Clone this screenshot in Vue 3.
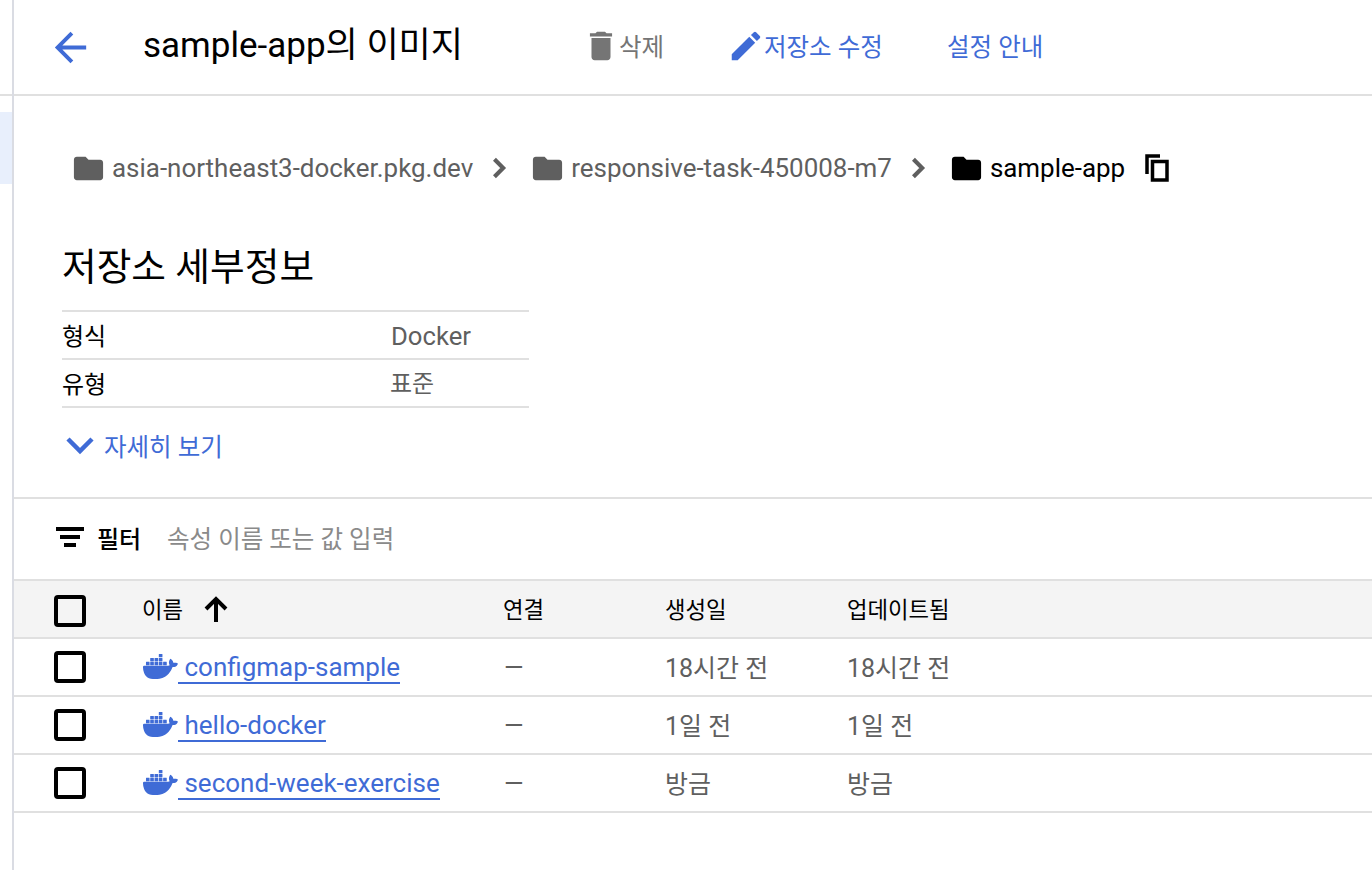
<script setup>
const docker = "M13.983 11.078h2.119a.186.186 0 00.186-.185V9.006a.186.186 0 00-.186-.186h-2.119a.185.185 0 00-.185.185v1.888c0 .102.083.185.185.185m-2.954-5.43h2.118a.186.186 0 00.186-.186V3.574a.186.186 0 00-.186-.185h-2.118a.185.185 0 00-.185.185v1.888c0 .102.082.185.185.186m0 2.716h2.118a.187.187 0 00.186-.186V6.29a.186.186 0 00-.186-.185h-2.118a.185.185 0 00-.185.185v1.887c0 .102.082.185.185.186m-2.93 0h2.12a.186.186 0 00.184-.186V6.29a.185.185 0 00-.185-.185H8.1a.185.185 0 00-.185.185v1.887c0 .102.083.185.185.186m-2.964 0h2.119a.186.186 0 00.185-.186V6.29a.185.185 0 00-.185-.185H5.136a.186.186 0 00-.186.185v1.887c0 .102.084.185.186.186m5.893 2.715h2.118a.186.186 0 00.186-.185V9.006a.186.186 0 00-.186-.186h-2.118a.185.185 0 00-.185.185v1.888c0 .102.082.185.185.185m-2.93 0h2.12a.185.185 0 00.184-.185V9.006a.185.185 0 00-.184-.186h-2.12a.185.185 0 00-.184.185v1.888c0 .102.083.185.185.185m-2.964 0h2.119a.185.185 0 00.185-.185V9.006a.185.185 0 00-.184-.186h-2.12a.186.186 0 00-.186.186v1.887c0 .102.084.185.186.185m-2.92 0h2.12a.185.185 0 00.184-.185V9.006a.185.185 0 00-.184-.186h-2.12a.185.185 0 00-.185.185v1.888c0 .102.083.185.185.185M23.763 9.89c-.065-.051-.672-.51-1.954-.51-.338.001-.676.03-1.01.087-.248-1.7-1.653-2.53-1.716-2.566l-.344-.199-.226.327c-.284.438-.49.922-.612 1.43-.23.97-.09 1.882.403 2.661-.595.332-1.55.413-1.744.42H.751a.751.751 0 00-.75.748 11.376 11.376 0 00.692 4.062c.545 1.428 1.355 2.48 2.41 3.124 1.18.723 3.1 1.137 5.275 1.137.983.003 1.963-.086 2.93-.266a12.248 12.248 0 003.823-1.389c.98-.567 1.86-1.288 2.61-2.136 1.252-1.418 1.998-2.997 2.553-4.4h.221c1.372 0 2.215-.549 2.68-1.009.309-.293.55-.65.707-1.046l.098-.288Z";
const rows = [
  { name: "configmap-sample", created: "18시간 전", updated: "18시간 전" },
  { name: "hello-docker", created: "1일 전", updated: "1일 전" },
  { name: "second-week-exercise", created: "방금", updated: "방금" },
];
const folder = "M10 4H4c-1.1 0-2 .9-2 2v12c0 1.1.9 2 2 2h16c1.1 0 2-.9 2-2V8c0-1.1-.9-2-2-2h-8l-2-2z";
</script>

<template>
  <div class="page">
    <aside class="rail"><div class="rail-head"></div><div class="rail-active"></div></aside>
    <main class="content">
      <header class="bar">
        <button class="back" aria-label="뒤로">
          <svg viewBox="0 0 24 24" width="47" height="47"><path fill="currentColor" d="M20 11H7.83l5.59-5.59L12 4l-8 8 8 8 1.41-1.41L7.83 13H20v-2z"/></svg>
        </button>
        <h1 class="title">sample-app의 이미지</h1>
        <button class="act act-del">
          <svg viewBox="0 0 24 24" width="38" height="38"><path fill="currentColor" d="M6 19c0 1.1.9 2 2 2h8c1.1 0 2-.9 2-2V7H6v12zM19 4h-3.5l-1-1h-5l-1 1H5v2h14V4z"/></svg>
          <span>삭제</span>
        </button>
        <button class="act act-edit">
          <svg viewBox="0 0 24 24" width="38" height="38"><path fill="currentColor" d="M3 17.25V21h3.75L17.81 9.94l-3.75-3.75L3 17.25zM20.71 7.04a1 1 0 0 0 0-1.41l-2.34-2.34a1 1 0 0 0-1.41 0l-1.83 1.83 3.75 3.75 1.83-1.83z"/></svg>
          <span>저장소 수정</span>
        </button>
        <button class="act act-guide"><span>설정 안내</span></button>
      </header>

      <nav class="crumbs">
        <svg class="crumb-folder" viewBox="0 0 24 24" width="35" height="35"><path fill="currentColor" :d="folder"/></svg>
        <span class="crumb-text">asia-northeast3-docker.pkg.dev</span>
        <svg class="crumb-sep" viewBox="0 0 24 24" width="38" height="38"><path fill="none" stroke="currentColor" stroke-width="2.6" d="M8.5 6.5l5.5 5.5-5.5 5.5"/></svg>
        <svg class="crumb-folder" viewBox="0 0 24 24" width="35" height="35"><path fill="currentColor" :d="folder"/></svg>
        <span class="crumb-text">responsive-task-450008-m7</span>
        <svg class="crumb-sep" viewBox="0 0 24 24" width="38" height="38"><path fill="none" stroke="currentColor" stroke-width="2.6" d="M8.5 6.5l5.5 5.5-5.5 5.5"/></svg>
        <svg class="crumb-folder crumb-dark" viewBox="0 0 24 24" width="35" height="35"><path fill="currentColor" :d="folder"/></svg>
        <span class="crumb-text crumb-dark">sample-app</span>
        <svg class="crumb-copy" viewBox="0 0 24 28" width="24" height="28"><path fill="none" stroke="currentColor" stroke-width="3.5" d="M2 20V2H15M7.5 7.5H22V26H7.5Z"/></svg>
      </nav>

      <section class="details">
        <h2 class="details-title">저장소 세부정보</h2>
        <div class="info">
          <div class="info-row"><span class="info-key">형식</span><span class="info-val info-latin">Docker</span></div>
          <div class="info-row"><span class="info-key">유형</span><span class="info-val info-ko">표준</span></div>
        </div>
        <button class="more">
          <svg viewBox="0 0 32 20" width="32" height="20"><path fill="none" stroke="currentColor" stroke-width="4.5" d="M4 4L16 16L28 4"/></svg>
          <span>자세히 보기</span>
        </button>
      </section>

      <div class="filter">
        <svg viewBox="0 0 28 20" width="28" height="20"><path fill="currentColor" d="M0 0h28v4H0zM4 8h20v4H4zM8 16h12v4H8z"/></svg>
        <span class="filter-label">필터</span>
        <span class="filter-hint">속성 이름 또는 값 입력</span>
      </div>

      <div class="table">
        <div class="tr th">
          <span class="check"></span>
          <div class="c-name">이름
            <svg class="sort" viewBox="0 0 24 26" width="24" height="26"><path fill="none" stroke="currentColor" stroke-width="4" d="M12 26V4M2 13L12 3L22 13"/></svg>
          </div>
          <div class="c-link">연결</div>
          <div class="c-date">생성일</div>
          <div class="c-date2">업데이트됨</div>
        </div>
        <div v-for="r in rows" :key="r.name" class="tr td">
          <span class="check"></span>
          <div class="c-name">
            <svg class="whale" viewBox="0 0 24 24" width="35" height="35"><path fill="currentColor" :d="docker"/></svg>
            <a class="link">{{ ' ' + r.name }}</a>
          </div>
          <div class="c-link">—</div>
          <div class="c-date when">{{ r.created }}</div>
          <div class="c-date2 when">{{ r.updated }}</div>
        </div>
      </div>
    </main>
  </div>
</template>

<style scoped>
.page { display: flex; width: 1372px; height: 870px; overflow: hidden; background: #fff; font-family: Roboto, "Noto Sans CJK KR", sans-serif; color: #000; }
.rail { width: 12px; flex: none; border-right: 2px solid #dadce3; display: flex; flex-direction: column; }
.rail-head { height: 94px; border-bottom: 2px solid #e0e0e0; margin-bottom: 16px; flex: none; }
.rail-active { height: 72px; background: #e8effc; flex: none; }
.content { flex: 1; min-width: 0; }
button { background: none; border: 0; padding: 0; font: inherit; display: flex; align-items: center; }
.bar { height: 94px; border-bottom: 2px solid #e0e0e0; display: flex; align-items: center; }
.back { color: #3f6bd6; margin-left: 33px; width: 47px; flex: none; }
.title { margin: 0 0 0 49px; width: 439px; flex: none; font-size: 35px; font-weight: 400; line-height: 1; position: relative; top: -2px; white-space: nowrap; }
.act { font-size: 24.5px; white-space: nowrap; flex: none; position: relative; top: -2px; }
.act svg { flex: none; position: relative; top: 1px; margin-right: -1px; }
.act-del { color: #757575; width: 145px; }
.act-edit { color: #3f6bd6; width: 220px; }
.act-guide { color: #3f6bd6; }

.crumbs { display: flex; align-items: center; height: 48px; margin: 48px 0 0 57px; font-size: 25.95px; color: #5f5f5f; white-space: nowrap; }
.crumbs svg { flex: none; }
.crumb-text { margin-left: 6px; }
.crumb-sep { margin: 0 11px 0 8px; }
.crumb-dark { color: #000; }
.crumb-copy { color: #000; margin-left: 20px; }

.details { margin-left: 48px; }
.details-title { margin: 0; padding-top: 50px; font-size: 37.7px; font-weight: 400; line-height: 50px; height: 118px; box-sizing: border-box; white-space: nowrap; }
.info { width: 467px; border-top: 2px solid #e0e0e0; }
.info-row { display: flex; align-items: center; height: 46px; border-bottom: 2px solid #e0e0e0; font-size: 24px; }
.info-key { width: 329px; flex: none; margin-bottom: 2px; }
.info-val { color: #5f5f5f; }
.info-ko { margin-bottom: 3px; margin-left: -1px; }
.info-latin { font-size: 25.7px; margin-top: 2px; }
.more { color: #3f6bd6; font-size: 24.5px; margin: 19px 0 0 2px; height: 36px; }
.more svg { margin-right: 8px; flex: none; }

.filter { margin-top: 34px; border-top: 2px solid #e0e0e0; height: 76px; padding-bottom: 4px; display: flex; align-items: center; padding-left: 42px; font-size: 24px; }
.filter svg { margin-right: 13px; flex: none; }
.filter-label { width: 70px; font-weight: 500; }
.filter-hint { color: #8a8a8a; font-size: 24.5px; }

.table { border-top: 2px solid #e0e0e0; }
.tr { display: flex; align-items: center; height: 56px; border-bottom: 2px solid #e0e0e0; font-size: 25px; color: #5f5f5f; white-space: nowrap; }
.th { background: #f4f4f4; color: #000; font-size: 22.3px; }
.check { width: 32px; height: 32px; box-sizing: border-box; border: 4px solid #000; border-radius: 4px; margin-left: 40px; flex: none; }
.th .check { margin-top: 4px; }
.c-name { width: 361px; margin-left: 57px; flex: none; display: flex; align-items: center; }
.th .c-name { margin-left: 56px; }
.th > div { margin-bottom: 2px; }
.c-link { width: 162px; flex: none; }
.td .c-link { width: 161px; }
.c-date { width: 182px; flex: none; }
.c-date2 { flex: none; }
.when { margin-bottom: 3px; }
.sort { margin-left: 21px; flex: none; position: relative; top: 1px; }
.whale { color: #3f6bd6; flex: none; position: relative; top: -1px; }
.link { color: #3f6bd6; white-space: pre; border-bottom: 2px solid #3f6bd6; line-height: 30px; font-size: 26px; position: relative; top: 1px; }
</style>
